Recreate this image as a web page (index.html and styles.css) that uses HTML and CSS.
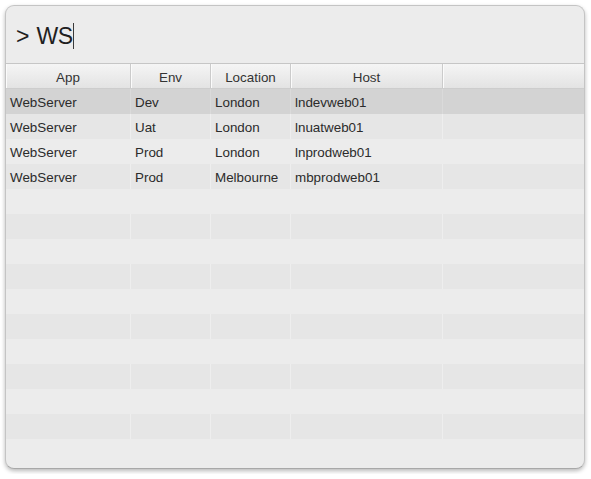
FILE: index.html
```html
<!DOCTYPE html>
<html>
<head>
<meta charset="utf-8">
<link rel="stylesheet" href="styles.css">
</head>
<body>
<div class="window">
  <div class="search"><span class="query">&gt; WS</span><span class="caret"></span></div>
  <div class="table">
    <div class="row head">
      <div class="cell">App</div>
      <div class="cell">Env</div>
      <div class="cell">Location</div>
      <div class="cell">Host</div>
      <div class="cell"></div>
    </div>
    <div class="row selected">
      <div class="cell">WebServer</div><div class="cell">Dev</div><div class="cell">London</div><div class="cell">lndevweb01</div><div class="cell"></div>
    </div>
    <div class="row dark">
      <div class="cell">WebServer</div><div class="cell">Uat</div><div class="cell">London</div><div class="cell">lnuatweb01</div><div class="cell"></div>
    </div>
    <div class="row light">
      <div class="cell">WebServer</div><div class="cell">Prod</div><div class="cell">London</div><div class="cell">lnprodweb01</div><div class="cell"></div>
    </div>
    <div class="row dark">
      <div class="cell">WebServer</div><div class="cell">Prod</div><div class="cell">Melbourne</div><div class="cell">mbprodweb01</div><div class="cell"></div>
    </div>
    <div class="row light"><div class="cell"></div><div class="cell"></div><div class="cell"></div><div class="cell"></div><div class="cell"></div></div>
    <div class="row dark"><div class="cell"></div><div class="cell"></div><div class="cell"></div><div class="cell"></div><div class="cell"></div></div>
    <div class="row light"><div class="cell"></div><div class="cell"></div><div class="cell"></div><div class="cell"></div><div class="cell"></div></div>
    <div class="row dark"><div class="cell"></div><div class="cell"></div><div class="cell"></div><div class="cell"></div><div class="cell"></div></div>
    <div class="row light"><div class="cell"></div><div class="cell"></div><div class="cell"></div><div class="cell"></div><div class="cell"></div></div>
    <div class="row dark"><div class="cell"></div><div class="cell"></div><div class="cell"></div><div class="cell"></div><div class="cell"></div></div>
    <div class="row light"><div class="cell"></div><div class="cell"></div><div class="cell"></div><div class="cell"></div><div class="cell"></div></div>
    <div class="row dark"><div class="cell"></div><div class="cell"></div><div class="cell"></div><div class="cell"></div><div class="cell"></div></div>
    <div class="row light"><div class="cell"></div><div class="cell"></div><div class="cell"></div><div class="cell"></div><div class="cell"></div></div>
    <div class="row dark"><div class="cell"></div><div class="cell"></div><div class="cell"></div><div class="cell"></div><div class="cell"></div></div>
  </div>
</div>
</body>
</html>
```

FILE: styles.css
```css
html, body {
  margin: 0;
  padding: 0;
  background: #ffffff;
  font-family: "Liberation Sans", Arial, sans-serif;
  color: #2b2b2b;
}

.window {
  margin: 5px;
  width: 580px;
  height: 464px;
  box-sizing: border-box;
  background: #ececec;
  border: 1px solid #c4c4c4;
  border-bottom-color: #a8a8a8;
  border-radius: 9px;
  box-shadow: 0 2px 4px rgba(0, 0, 0, 0.28);
  overflow: hidden;
  display: flex;
  flex-direction: column;
}

.search {
  height: 57px;
  padding-left: 10px;
  display: flex;
  align-items: center;
  box-sizing: border-box;
  padding-top: 3px;
}

.query {
  font-size: 23px;
  letter-spacing: -0.6px;
  word-spacing: 2px;
  color: #1f1f1f;
}

.caret {
  width: 1px;
  height: 26px;
  background: #3a3a3a;
  margin-left: 1px;
  margin-top: -1px;
}

.table {
  display: flex;
  flex-direction: column;
}

.row {
  display: grid;
  grid-template-columns: 125px 80px 80px 152px 1fr;
  height: 25px;
  font-size: 13.4px;
  line-height: 25px;
}

.cell {
  padding-left: 4px;
  padding-top: 1px;
  white-space: nowrap;
  overflow: hidden;
  box-sizing: border-box;
}

.head {
  height: 26px;
  box-sizing: border-box;
  border-top: 1px solid #c6c6c6;
  border-bottom: 1px solid #cdcdcd;
  background: linear-gradient(#f5f5f5, #e3e3e3);
  line-height: 24px;
  color: #333;
}

.head .cell {
  text-align: center;
  padding-left: 0;
  padding-top: 2px;
  border-right: 1px solid #cbcbcb;
  box-shadow: inset 1px 0 0 #fbfbfb;
}

.head .cell:last-child {
  border-right: none;
}

.dark {
  background: #e6e6e6;
}

.dark .cell {
  border-right: 1px solid #eeeeee;
}

.dark .cell:last-child {
  border-right: none;
}

.light {
  background: #ececec;
}

.selected {
  background: #d3d3d3;
}

.selected .cell {
  border-right: 1px solid #dadada;
}

.selected .cell:last-child {
  border-right: none;
}
```
